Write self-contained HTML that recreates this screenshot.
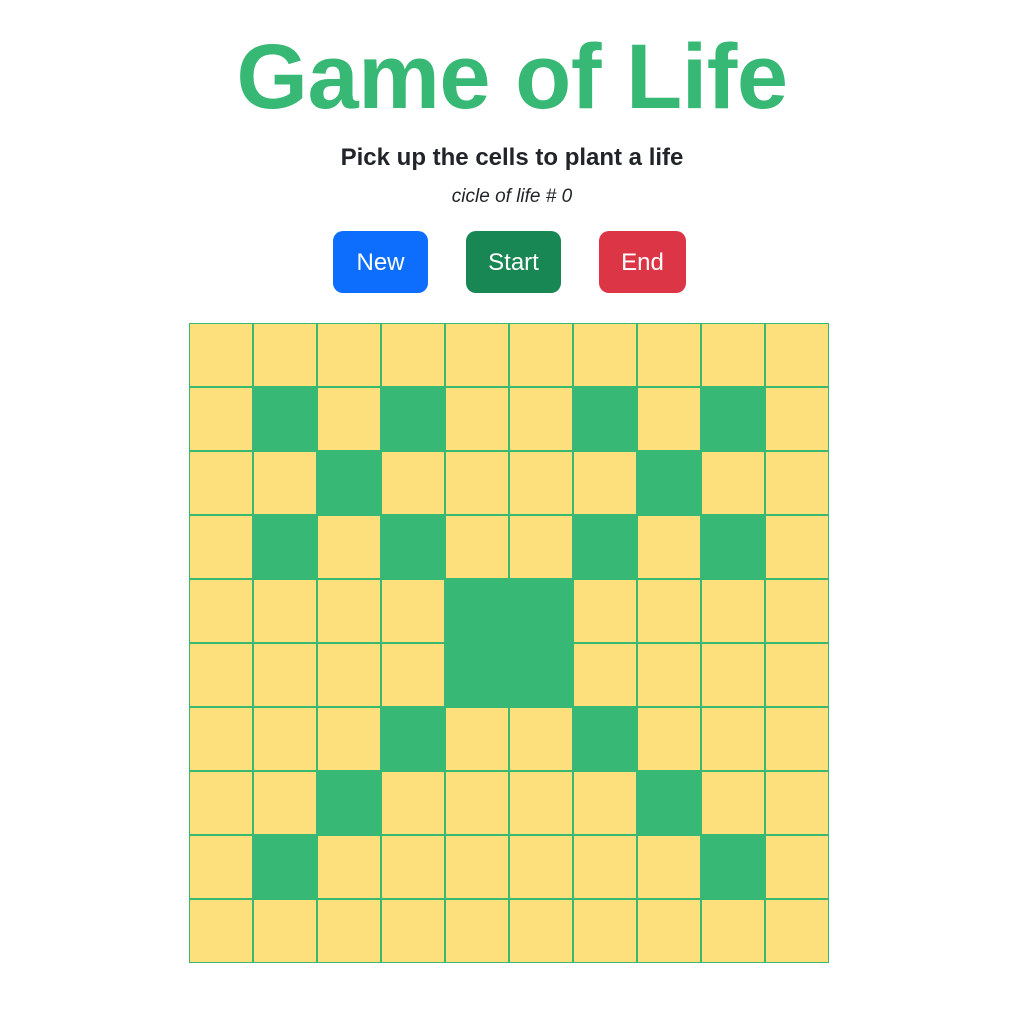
<!DOCTYPE html>
<html><head><style>
body{margin:0;background:#fff;font-family:"Liberation Sans",sans-serif;color:#212529}
h1{position:absolute;top:22px;left:0;width:1024px;text-align:center;margin:0;font-size:92px;font-weight:bold;color:#37b875;line-height:110px;letter-spacing:-0.5px}
.sub{position:absolute;top:143px;width:1024px;text-align:center;font-size:24px;font-weight:bold;line-height:30px}
.cyc{position:absolute;top:185px;width:1024px;text-align:center;font-size:19px;font-style:italic;line-height:24px}
.btn{position:absolute;top:231px;height:62px;border-radius:10px;color:#fff;font-size:24px;line-height:64px;text-align:center}
.grid{position:absolute;left:189px;top:323px;width:640px;height:640px;display:grid;grid-template-columns:repeat(10,64px);grid-template-rows:repeat(10,64px)}
.grid div{box-sizing:border-box;border:1px solid #37b875;background:#fde07c}
.grid div.g{background:#37b875}
</style></head><body>
<h1>Game of Life</h1>
<div class="sub">Pick up the cells to plant a life</div>
<div class="cyc">cicle of life # 0</div>
<div class="btn" style="left:333px;width:95px;background:#0d6efd">New</div>
<div class="btn" style="left:466px;width:95px;background:#198754">Start</div>
<div class="btn" style="left:599px;width:87px;background:#dc3545">End</div>
<div class="grid" id="g"></div>
<script>
var G={1:[1,3,6,8],2:[2,7],3:[1,3,6,8],4:[4,5],5:[4,5],6:[3,6],7:[2,7],8:[1,8]};
var h='';for(var r=0;r<10;r++)for(var c=0;c<10;c++){h+='<div'+((G[r]&&G[r].indexOf(c)>=0)?' class="g"':'')+'></div>';}
document.getElementById('g').innerHTML=h;
</script>
</body></html>
